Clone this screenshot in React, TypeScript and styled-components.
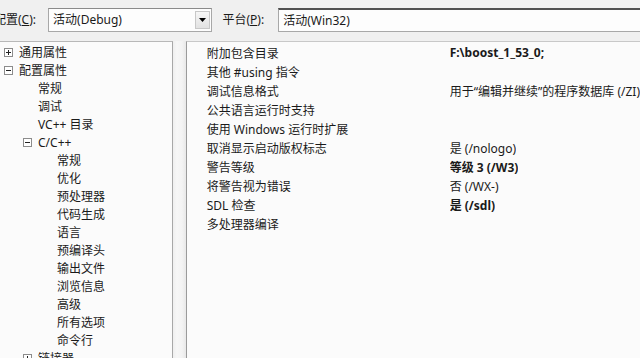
import React from "react";
import styled, { createGlobalStyle } from "styled-components";

const Global = createGlobalStyle`
  html, body { margin: 0; padding: 0; background: #f0f0f0; overflow: hidden; }
  body { font-family: "Noto Sans", "Noto Sans CJK SC", sans-serif; font-size: 12px; color: #1a1a1a; }
`;

const Page = styled.div`
  width: 640px;
  height: 358px;
  display: flex;
  flex-direction: column;
  background: #f0f0f0;
  overflow: hidden;
`;

const Toolbar = styled.div`
  height: 41px;
  display: flex;
  align-items: flex-start;
  padding-top: 8px;
  box-sizing: border-box;
  margin-left: -6px;
`;

const Label = styled.span<{ $gap: number; $lead?: number }>`
  line-height: 24px;
  margin-left: ${(p) => p.$lead ?? 0}px;
  margin-right: ${(p) => p.$gap}px;
  white-space: nowrap;
  & u { text-decoration: underline; }
`;

const Combo = styled.div<{ $w: number; $dark?: boolean }>`
  width: ${(p) => p.$w}px;
  height: 24px;
  box-sizing: border-box;
  background: #fdfdfd;
  border: 1px solid #a8a8a8;
  border-top: ${(p) => (p.$dark ? "2px solid #505050" : "1px solid #8a8a8a")};
  border-right: ${(p) => (p.$dark ? "none" : "1px solid #a8a8a8")};
  display: flex;
  align-items: center;
  padding-left: 4px;
  line-height: 20px;
`;

const ComboText = styled.span`
  flex: 1;
`;

const DropBtn = styled.div`
  width: 15px;
  height: 18px;
  margin-right: 1px;
  border: 1px solid #c8c8c8;
  background: linear-gradient(#f6f6f6, #e2e2e2);
  display: flex;
  align-items: center;
  justify-content: center;
  box-sizing: border-box;
`;

const Body = styled.div`
  flex: 1;
  display: flex;
  min-height: 0;
`;

const TreePanel = styled.div`
  width: 177px;
  box-sizing: border-box;
  background: #fbfbfb;
  border-top: 1px solid #b8b8b8;
  border-right: 1px solid #a8a8a8;
  padding-top: 1px;
`;

const Splitter = styled.div`
  width: 13px;
  background: linear-gradient(90deg, #efefef 0, #f7f7f7 30%, #f3f3f3 70%, #e8e8e8 100%);
`;

const GridPanel = styled.div`
  flex: 1;
  background: #fbfbfb;
  border-left: 1px solid #9a9a9a;
  border-top: 1px solid #c8c8c8;
  padding-top: 1px;
`;

const TreeRow = styled.div<{ $indent: number }>`
  height: 18px;
  display: flex;
  align-items: center;
  padding-left: ${(p) => p.$indent}px;
  white-space: nowrap;
`;

const Expander = styled.span`
  width: 9px;
  height: 9px;
  box-sizing: border-box;
  border: 1px solid #8c8c8c;
  background: #fff;
  position: relative;
  margin-right: 6px;
  flex: none;
  &::before {
    content: "";
    position: absolute;
    left: 1px;
    top: 3px;
    width: 5px;
    height: 1px;
    background: #222;
  }
`;

const PlusExpander = styled(Expander)`
  &::after {
    content: "";
    position: absolute;
    left: 3px;
    top: 1px;
    width: 1px;
    height: 5px;
    background: #222;
  }
`;

const PropRow = styled.div`
  height: 19px;
  display: flex;
  align-items: center;
  white-space: nowrap;
`;

const PropName = styled.span`
  width: 243px;
  padding-left: 20px;
  flex: none;
`;

const PropValue = styled.span<{ $bold?: boolean }>`
  font-weight: ${(p) => (p.$bold ? 700 : 400)};
  overflow: hidden;
`;

type TreeItem = { text: string; indent: number; exp?: "+" | "-" };

const tree: TreeItem[] = [
  { text: "通用属性", indent: 4, exp: "+" },
  { text: "配置属性", indent: 4, exp: "-" },
  { text: "常规", indent: 38 },
  { text: "调试", indent: 38 },
  { text: "VC++ 目录", indent: 38 },
  { text: "C/C++", indent: 23, exp: "-" },
  { text: "常规", indent: 57 },
  { text: "优化", indent: 57 },
  { text: "预处理器", indent: 57 },
  { text: "代码生成", indent: 57 },
  { text: "语言", indent: 57 },
  { text: "预编译头", indent: 57 },
  { text: "输出文件", indent: 57 },
  { text: "浏览信息", indent: 57 },
  { text: "高级", indent: 57 },
  { text: "所有选项", indent: 57 },
  { text: "命令行", indent: 57 },
  { text: "链接器", indent: 23, exp: "+" },
];

const props: { name: string; value: string; bold?: boolean }[] = [
  { name: "附加包含目录", value: "F:\\boost_1_53_0;", bold: true },
  { name: "其他 #using 指令", value: "" },
  { name: "调试信息格式", value: "用于“编辑并继续”的程序数据库 (/ZI)" },
  { name: "公共语言运行时支持", value: "" },
  { name: "使用 Windows 运行时扩展", value: "" },
  { name: "取消显示启动版权标志", value: "是 (/nologo)" },
  { name: "警告等级", value: "等级 3 (/W3)", bold: true },
  { name: "将警告视为错误", value: "否 (/WX-)" },
  { name: "SDL 检查", value: "是 (/sdl)", bold: true },
  { name: "多处理器编译", value: "" },
];

export default function App() {
  return (
    <Page>
      <Global />
      <Toolbar>
        <Label $gap={12}>
          配置(<u>C</u>):
        </Label>
        <Combo $w={168}>
          <ComboText>活动(Debug)</ComboText>
          <DropBtn>
            <svg width="7" height="4" viewBox="0 0 7 4">
              <path d="M0 0h7L3.5 4z" fill="#000" />
            </svg>
          </DropBtn>
        </Combo>
        <Label $gap={14} $lead={10}>
          平台(<u>P</u>):
        </Label>
        <Combo $w={370} $dark>
          <ComboText>活动(Win32)</ComboText>
        </Combo>
      </Toolbar>
      <Body>
        <TreePanel>
          {tree.map((t, i) => (
            <TreeRow key={i} $indent={t.indent}>
              {t.exp === "+" && <PlusExpander />}
              {t.exp === "-" && <Expander />}
              {t.text}
            </TreeRow>
          ))}
        </TreePanel>
        <Splitter />
        <GridPanel>
          {props.map((p, i) => (
            <PropRow key={i}>
              <PropName>{p.name}</PropName>
              <PropValue $bold={p.bold}>{p.value}</PropValue>
            </PropRow>
          ))}
        </GridPanel>
      </Body>
    </Page>
  );
}
